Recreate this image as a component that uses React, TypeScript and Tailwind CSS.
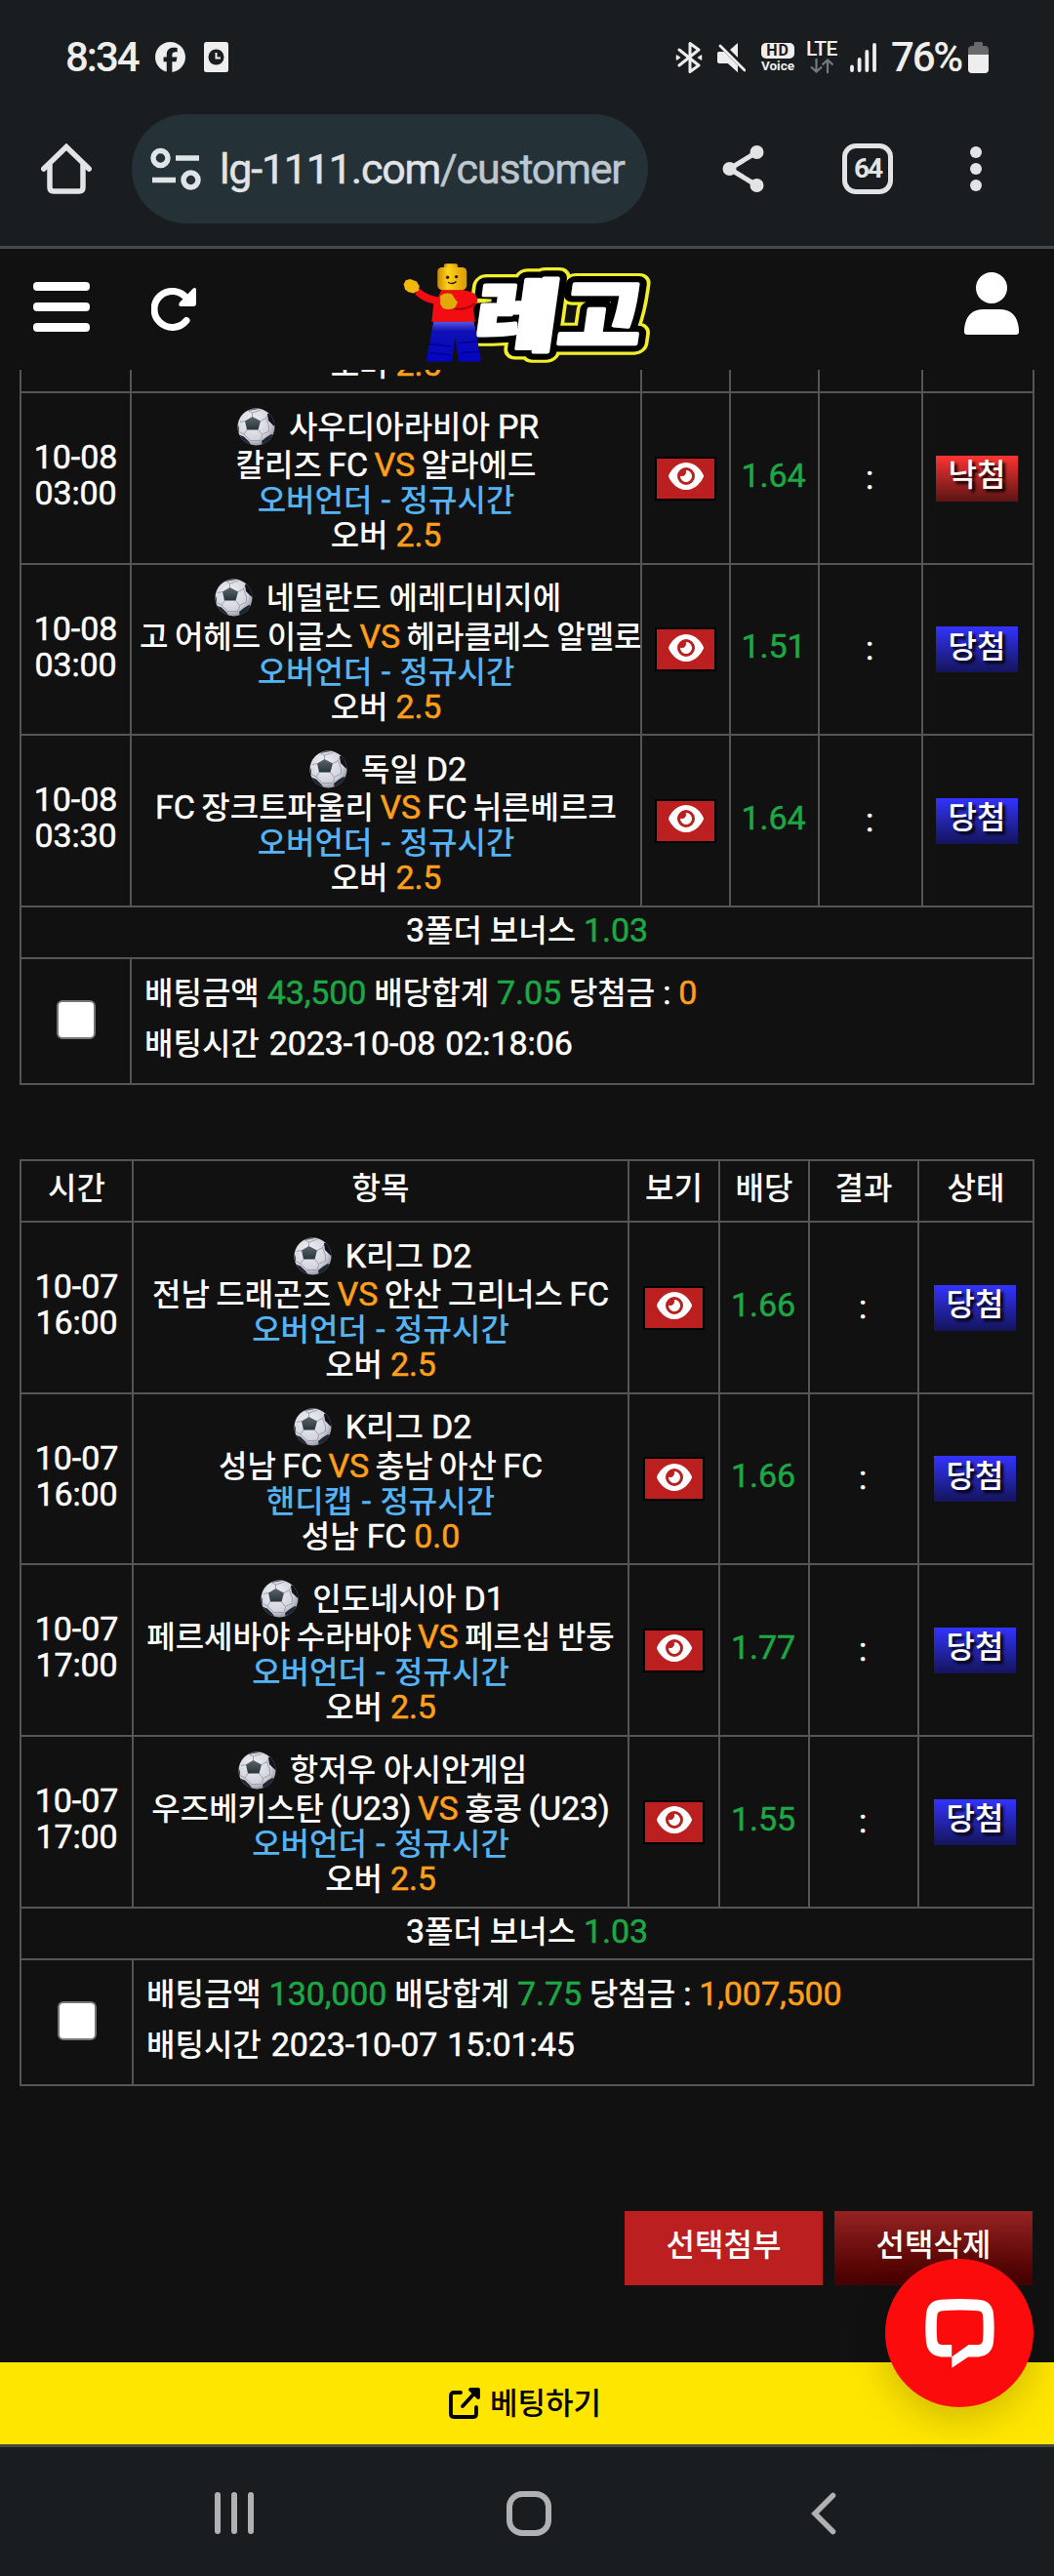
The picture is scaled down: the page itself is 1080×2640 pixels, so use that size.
import React from 'react';
import { FaFacebook, FaEye } from 'react-icons/fa6';

type Match = {
  id: number;
  date: string;
  time: string;
  league: string;
  home: string;
  away: string;
  market: string;
  pick: string;
  line: string;
  odds: string;
  won: boolean;
};

const firstSlip: Match[] = [
  { id: 1, date: '10-08', time: '03:00', league: '사우디아라비아 PR', home: '칼리즈 FC', away: '알라에드', market: '오버언더 - 정규시간', pick: '오버', line: '2.5', odds: '1.64', won: false },
  { id: 2, date: '10-08', time: '03:00', league: '네덜란드 에레디비지에', home: '고 어헤드 이글스', away: '헤라클레스 알멜로', market: '오버언더 - 정규시간', pick: '오버', line: '2.5', odds: '1.51', won: true },
  { id: 3, date: '10-08', time: '03:30', league: '독일 D2', home: 'FC 장크트파울리', away: 'FC 뉘른베르크', market: '오버언더 - 정규시간', pick: '오버', line: '2.5', odds: '1.64', won: true },
];

const secondSlip: Match[] = [
  { id: 4, date: '10-07', time: '16:00', league: 'K리그 D2', home: '전남 드래곤즈', away: '안산 그리너스 FC', market: '오버언더 - 정규시간', pick: '오버', line: '2.5', odds: '1.66', won: true },
  { id: 5, date: '10-07', time: '16:00', league: 'K리그 D2', home: '성남 FC', away: '충남 아산 FC', market: '핸디캡 - 정규시간', pick: '성남 FC', line: '0.0', odds: '1.66', won: true },
  { id: 6, date: '10-07', time: '17:00', league: '인도네시아 D1', home: '페르세바야 수라바야', away: '페르십 반둥', market: '오버언더 - 정규시간', pick: '오버', line: '2.5', odds: '1.77', won: true },
  { id: 7, date: '10-07', time: '17:00', league: '항저우 아시안게임', home: '우즈베키스탄 (U23)', away: '홍콩 (U23)', market: '오버언더 - 정규시간', pick: '오버', line: '2.5', odds: '1.55', won: true },
];

const firstCols = 'grid grid-cols-[113px_523px_91px_91px_106px_114px]';
const secondCols = 'grid grid-cols-[115px_508px_93px_92px_112px_118px]';
const cell = 'flex items-center justify-center border-r-2 border-b-2 border-[#555] overflow-hidden';

// Latin letters and digits are set a little larger and lighter than the hangul
const Txt = ({ children }: { children: string }) => (
  <>
    {children.split(/([A-Za-z0-9().,:-]+)/).map((part, i) =>
      i % 2 ? <span key={i} className="text-[34px] font-normal tracking-[-0.1px] [-webkit-text-stroke:0.5px]">{part}</span> : part
    )}
  </>
);

const Ball = () => (
  <svg viewBox="0 0 39 39" className="h-[39px] w-[39px] shrink-0">
    <defs>
      <radialGradient id="ball" cx="0.4" cy="0.35" r="0.7">
        <stop offset="0" stopColor="#f0f0f6" />
        <stop offset="0.7" stopColor="#d3d3de" />
        <stop offset="1" stopColor="#8c8c98" />
      </radialGradient>
      <linearGradient id="patch" x1="0" y1="0" x2="0" y2="1">
        <stop offset="0" stopColor="#5d6468" />
        <stop offset="1" stopColor="#26363a" />
      </linearGradient>
      <clipPath id="ballClip"><circle cx="19.5" cy="19.5" r="19" /></clipPath>
    </defs>
    <circle cx="19.500" cy="19.500" r="19" fill="url(#ball)" />
    <g clipPath="url(#ballClip)">
      <path
        d="M15.500 9V5L10 2M15.500 5l9-3M24 13.500l5.500-3M29.500 10.500l3-5M29.500 10.500l3 8M21.500 22.500l4 5M25.500 27.500l7-3.500M25.500 27.500l-1 5M10 22.500L7 27M7 27l-6-3M7 27l6 6M8 13.500l-5 1M32.500 18v6M13 33.500h11"
        fill="none"
        stroke="#9a9aa6"
        strokeWidth="0.9"
      />
      <path d="M15.500 9l8.500 4.500-2.500 9H10L8 13.500z" fill="url(#patch)" />
      <path d="M31 6l4-1 5 9v6l-3-2-5-5z" fill="#0f1318" />
      <path d="M3 28l4 1.500 5 5 3 4.500-6-1-6-6z" fill="#1c2733" />
      <path d="M25 34l5-4 5-3 2 1-6 8-5 3z" fill="#1c2733" />
      <path d="M10 3l7-3h7l-4 1.500-6 1z" fill="#565b62" />
      <path d="M0 16l2 4v5l-2-2z" fill="#4a5058" />
    </g>
  </svg>
);

const Logo = () => (
  <svg viewBox="40 45 760 305" className="h-[102px] w-[253px] overflow-visible">
    <defs>
      <linearGradient id="skin" x1="0" y1="0" x2="1" y2="0">
        <stop offset="0" stopColor="#c98a00" />
        <stop offset="0.35" stopColor="#ffd21c" />
        <stop offset="1" stopColor="#d99b00" />
      </linearGradient>
      <linearGradient id="legs" x1="0" y1="0" x2="0" y2="1">
        <stop offset="0" stopColor="#5a5ae6" />
        <stop offset="0.25" stopColor="#1010b4" />
        <stop offset="1" stopColor="#0404c4" />
      </linearGradient>
    </defs>
    <g
      transform="translate(252 293) skewX(-8) scale(1.09 0.94)"
      fontFamily="'Noto Sans CJK KR', sans-serif"
      fontWeight="900"
      fontSize="256"
      strokeLinejoin="round"
    >
      <text stroke="#f2ee2c" strokeWidth="72" fill="#f2ee2c">레고</text>
      <text stroke="#000" strokeWidth="52" fill="#000">레고</text>
      <text stroke="#fff" strokeWidth="12" fill="#fff">레고</text>
    </g>
    <path d="M262 152l50 2v8l-48 5z" fill="#f2ee2c" />
    {/* minifigure */}
    <path d="M134 222h124l8 40 14 84h-68l-12-74-10 74h-80l10-48z" fill="url(#legs)" />
    <path d="M120 292l66 8M122 320l64 6M210 290l62-6M214 320l62-4" stroke="#02028c" strokeWidth="5" />
    <path d="M76 138l14-16q26 22 58 26l10-22h70l26 8q18 12 14 30l-12 18 6 42H128l6-56q-32-4-58-30z" fill="#f20d12" />
    <path d="M196 184q40 4 64-16" fill="none" stroke="#a80008" strokeWidth="6" />
    <rect x="166" y="45" width="42" height="20" rx="5" fill="url(#skin)" />
    <rect x="146" y="56" width="90" height="70" rx="14" fill="url(#skin)" />
    <circle cx="177" cy="87" r="5" fill="#2b1a00" />
    <circle cx="204" cy="85" r="5" fill="#2b1a00" />
    <path d="M178 102q14 9 26-2" fill="none" stroke="#2b1a00" strokeWidth="4" />
    <path d="M42 108l6-12 14-4 20 8 8 14-2 14-16 8-16-4-10-8z" fill="#f0b90c" />
    <path d="M154 144q14-12 36-6l10 16 8 10-8 16q-20 10-38 2l-8-14z" fill="#e0aa08" />
  </svg>
);

const MatchRow = ({ match, cols, height }: { match: Match; cols: string; height: string }) => (
  <div className={`${cols} ${height}`}>
    <div className={`${cell} flex-col pb-1.5 leading-9`}>
      <span><Txt>{match.date}</Txt></span>
      <span><Txt>{match.time}</Txt></span>
    </div>
    <div className={`${cell} flex-col whitespace-nowrap pt-[3px] leading-9`}>
      <div className="flex h-10 items-center gap-[14px] pl-1">
        <Ball />
        <span><Txt>{match.league}</Txt></span>
      </div>
      <div className="flex h-[37px] w-full items-center px-2 pt-0.5 [word-spacing:-1.5px]">
        <p className="mx-auto">
          <Txt>{match.home}</Txt> <span className="text-[#ff9f1a]"><Txt>VS</Txt></span> <Txt>{match.away}</Txt>
        </p>
      </div>
      <p className="h-9 text-[#56b4f5] [word-spacing:1.5px]"><Txt>{match.market}</Txt></p>
      <p className="h-9">
        <Txt>{match.pick}</Txt> <span className="text-[#ff9f1a]"><Txt>{match.line}</Txt></span>
      </p>
    </div>
    <div className={cell}>
      <button className="flex h-[45px] w-[63px] items-center justify-center border-2 border-black bg-[#bc1f1f] pb-1">
        <FaEye className="h-[32px] w-[36px]" />
      </button>
    </div>
    <div className={`${cell} pr-0.5 pb-1.5 text-[#1da745]`}><span><Txt>{match.odds}</Txt></span></div>
    <div className={`${cell} pr-0.5 pb-0.5`}><span><Txt>:</Txt></span></div>
    <div className={`${cell} pr-0.5`}>
      <span
        className={`flex h-[47px] w-[84px] items-center justify-center bg-linear-to-b pb-1.5 [text-shadow:3px_3px_3px_#000] ${
          match.won ? 'from-[#3333ff] to-[#14145c]' : 'from-[#ff3333] to-[#5c1414]'
        }`}
      >
        {match.won ? '당첨' : '낙첨'}
      </span>
    </div>
  </div>
);

const BonusRow = () => (
  <div className="flex h-[53px] items-center justify-center border-r-2 border-b-2 border-[#555] pb-1">
    <p><Txt>3폴더 보너스</Txt> <span className="text-[#1da745]"><Txt>1.03</Txt></span></p>
  </div>
);

type SummaryProps = { cols: string; stake: string; total: string; payout: string; placed: string };

const SummaryRow = ({ cols, stake, total, payout, placed }: SummaryProps) => (
  <div className={`${cols} h-[129px]`}>
    <label className={`${cell} pb-1`}>
      <input type="checkbox" className="h-10 w-10 appearance-none rounded-md border-2 border-[#767676] bg-white" />
    </label>
    <div className="col-span-5 flex flex-col justify-center border-r-2 border-b-2 border-[#555] pb-1.5 pl-[13px] leading-[51px]">
      <p>
        배팅금액 <span className="text-[#1da745]"><Txt>{stake}</Txt></span> 배당합계{' '}
        <span className="text-[#1da745]"><Txt>{total}</Txt></span> <Txt>당첨금 :</Txt>{' '}
        <span className="text-[#ff9f1a]"><Txt>{payout}</Txt></span>
      </p>
      <p className="[word-spacing:2px]">배팅시간 <Txt>{placed}</Txt></p>
    </div>
  </div>
);

const StatusBar = () => (
  <div className="flex h-[117px] items-center justify-between px-[67px] text-[#eee]">
    <div className="flex items-center">
      <span className="w-[92px] text-[42px] leading-none font-medium tracking-[-2px]">8:34</span>
      <FaFacebook className="h-[31px] w-[31px]" />
      <svg viewBox="0 0 25 31" className="ml-[19px] h-[31px] w-[25px]">
        <rect width="25" height="31" rx="2.500" fill="#eee" />
        <circle cx="12.500" cy="15.500" r="8" fill="#191d1f" />
        <path d="M12.500 11v5.500H17" fill="none" stroke="#eee" strokeWidth="2" />
      </svg>
    </div>
    <div className="flex items-center">
      <svg viewBox="0 0 28 32" className="h-8 w-7" fill="none" stroke="#eee" strokeWidth="3" strokeLinecap="round" strokeLinejoin="round">
        <path d="M4 8l20 16-9 6.500V1.500L24 8 4 24" />
        <path d="M1.500 14v4l3-2zM26.500 14v4l-3-2z" fill="#eee" strokeWidth="1.500" />
      </svg>
      <svg viewBox="0 0 29 30" className="ml-[15px] h-[30px] w-[29px]" fill="#eee">
        <path d="M2 9h5l14 14v7l-10-9H3q-3 0-3-3v-6q0-3 2-3zM13 7l8-7v15z" />
        <path d="M3 3l25 25" stroke="#191d1f" strokeWidth="6" />
        <path d="M2 9h5l14 14v7l-10-9H3q-3 0-3-3v-6q0-3 2-3z" />
        <path d="M3 3l25 25" stroke="#eee" strokeWidth="2.800" strokeLinecap="round" />
      </svg>
      <div className="ml-4 flex w-[34px] flex-col items-center">
        <span className="flex h-4 w-full items-center justify-center rounded-[5px] bg-[#eee] text-[16px] leading-none font-bold tracking-[1px] text-[#191d1f]">HD</span>
        <span className="text-[13.500px] leading-[14px] font-bold">Voice</span>
      </div>
      <div className="ml-3 flex w-8 flex-col items-center gap-[2px]">
        <span className="text-[21px] leading-[16px] font-medium tracking-[-0.5px]">LTE</span>
        <svg viewBox="0 0 24 15" className="h-[15px] w-6" fill="none" stroke="#77797b" strokeWidth="2.200">
          <path d="M6.500 0v13M1 8.500l5.500 5 5.500-5M18 15V2M12.500 6.500L18 1.500l5.500 5" />
        </svg>
      </div>
      <svg viewBox="0 0 27 30" className="ml-[13px] h-[30px] w-[27px]" stroke="#eee" strokeWidth="3.800" strokeLinecap="round">
        <path d="M2 24.500V28M9.600 17v11M17.300 9v19M25 2v26" />
      </svg>
      <span className="ml-[15px] w-[79px] text-[42px] leading-none font-medium tracking-[-2.200px]">76%</span>
      <svg viewBox="0 0 21 32" className="h-8 w-[21px]">
        <path d="M6 4V1.500Q6 0 7.500 0h6Q15 0 15 1.500V4h2q4 0 4 4v6H0V8q0-4 4-4z" fill="#68696b" />
        <path d="M0 13h21v15q0 4-4 4H4q-4 0-4-4z" fill="#eee" />
      </svg>
    </div>
  </div>
);

const BrowserBar = () => (
  <div className="flex h-[138px] items-start border-b-[3px] border-[#43494c]">
    <div className="flex h-28 w-full items-center">
      <svg viewBox="0 0 52 52" className="ml-[42px] h-[52px] w-[52px]" fill="none" stroke="#e1e3e5" strokeWidth="5.500" strokeLinecap="round">
        <path d="M2.800 26L26 3.500 49.200 26" strokeLinejoin="miter" />
        <path d="M9 22v23q0 4 4 4h26q4 0 4-4V22" />
      </svg>
      <div className="ml-[41px] flex h-28 w-[529px] items-center rounded-full bg-[#243238]">
        <svg viewBox="0 0 52 44" className="ml-[19px] h-11 w-[52px]" fill="none" stroke="#dfe4e7" strokeWidth="5.500">
          <circle cx="10.500" cy="11" r="7.500" />
          <circle cx="41.500" cy="33.500" r="7.500" />
          <path d="M26 11h24M2 33.500h24" />
        </svg>
        <span className="ml-[19px] text-[43px] leading-none tracking-[-1.200px] whitespace-nowrap text-[#e1e3e5] [-webkit-text-stroke:0.5px]">
          lg-1111.com<span className="text-[#bec7cd]">/customer</span>
        </span>
      </div>
      <svg viewBox="0 0 43 50" className="ml-[76px] h-[50px] w-[43px]" fill="#e1e3e5" stroke="#e1e3e5">
        <path d="M35.500 8L7.500 25l28 17" fill="none" strokeWidth="5" />
        <circle cx="35.500" cy="8" r="7" stroke="none" />
        <circle cx="7.500" cy="25" r="7" stroke="none" />
        <circle cx="35.500" cy="42" r="7" stroke="none" />
      </svg>
      <div className="ml-20 flex h-[52px] w-[52px] items-center justify-center rounded-[14px] border-[5.500px] border-[#e1e3e5] text-[28px] leading-none font-bold tracking-[-2px] text-[#e1e3e5]">
        64
      </div>
      <div className="ml-[79px] flex flex-col gap-[5px]">
        <i className="h-3 w-3 rounded-full bg-[#e1e3e5]" />
        <i className="h-3 w-3 rounded-full bg-[#e1e3e5]" />
        <i className="h-3 w-3 rounded-full bg-[#e1e3e5]" />
      </div>
    </div>
  </div>
);

const SiteHeader = () => (
  <header className="flex h-[124px] items-start">
    <div className="mt-[34px] ml-[34px] flex w-[58px] flex-col gap-3">
      <i className="h-[9px] rounded-[4px] bg-white" />
      <i className="h-[9px] rounded-[4px] bg-white" />
      <i className="h-[9px] rounded-[4px] bg-white" />
    </div>
    <svg viewBox="0 0 46 45" className="mt-[39px] ml-[63px] h-[45px] w-[46px]">
      <path d="M36 34.500A18.500 18.500 0 1 1 36.500 12" fill="none" stroke="#fff" strokeWidth="7" strokeLinecap="round" />
      <path d="M43 1.500q3-1.500 3 1.500v14q0 3-3 3H30q-3-1-1-4z" fill="#fff" />
    </svg>
    <div className="mt-[15px] ml-[212px]">
      <Logo />
    </div>
    <svg viewBox="0 0 56 64" className="mt-6 ml-[322px] h-16 w-14" fill="#fff">
      <circle cx="28" cy="16" r="16" />
      <path d="M0 61V58Q2 38 20 38h16q18 0 20 20v3q0 3-3 3H3q-3 0-3-3z" />
    </svg>
  </header>
);

const App = () => {
  return (
    <div className="flex h-[2640px] w-[1080px] flex-col bg-[#111] font-[Roboto,'Noto_Sans_CJK_KR',sans-serif] text-white">
      <div className="bg-[#191d1f]">
        <StatusBar />
        <BrowserBar />
      </div>
      <SiteHeader />

      <main className="h-[2042px] px-5 text-[32px] font-medium">
        <section className="border-l-2 border-[#555]">
          {/* scrolled under the header */}
          <div className={`${firstCols} h-6`}>
            <div className={cell} />
            <div className={`${cell} items-end! pb-[9px] leading-9`}>
              <p>오버 <span className="text-[#ff9f1a]"><Txt>2.5</Txt></span></p>
            </div>
            <div className={cell} />
            <div className={cell} />
            <div className={cell} />
            <div className={cell} />
          </div>
          {firstSlip.map((match, i) => (
            <MatchRow key={match.id} match={match} cols={firstCols} height={i === 1 ? 'h-[175px]' : 'h-[176px]'} />
          ))}
          <BonusRow />
          <SummaryRow cols={firstCols} stake="43,500" total="7.05" payout="0" placed="2023-10-08 02:18:06" />
        </section>

        <section className="mt-[76px] border-t-2 border-l-2 border-[#555]">
          <div className={`${secondCols} h-[63px]`}>
            {['시간', '항목', '보기', '배당', '결과', '상태'].map((title) => (
              <div key={title} className={`${cell} pb-1.5`}>{title}</div>
            ))}
          </div>
          {secondSlip.map((match, i) => (
            <MatchRow key={match.id} match={match} cols={secondCols} height={i === 1 ? 'h-[175px]' : 'h-[176px]'} />
          ))}
          <BonusRow />
          <SummaryRow cols={secondCols} stake="130,000" total="7.75" payout="1,007,500" placed="2023-10-07 15:01:45" />
        </section>

        <div className="mt-32 mr-0.5 flex justify-end gap-3">
          <button className="h-[76px] w-[203px] bg-[#bc1f1f] pb-1.5">선택첨부</button>
          <button className="h-[76px] w-[203px] bg-linear-to-b from-[#962222] to-[#450000] pb-1.5">선택삭제</button>
        </div>
      </main>

      <div className="relative flex h-[87px] items-center justify-center gap-2.5 border-b-[3px] border-[#43493c] bg-[#ffe600] pr-1 text-[31px] text-black">
        <svg viewBox="0 0 32 32" className="h-8 w-8" fill="none" stroke="#000" strokeWidth="3.800" strokeLinecap="round" strokeLinejoin="round">
          <path d="M12 5H5Q2 5 2 8v19q0 3 3 3h20q3 0 3-3v-7M14 19L25 7" />
          <path d="M22 2h8v8z" fill="#000" />
        </svg>
        <span className="leading-none font-medium">베팅하기</span>
        <button className="absolute top-[-106px] right-[21px] flex h-[152px] w-[152px] items-center justify-center rounded-full bg-[#fb0b0b] shadow-[0_12px_40px_rgba(0,0,0,0.2)]">
          <svg viewBox="1044 355 212 214" className="ml-px h-[71px] w-[71px]">
            <path
              fill="#fff"
              fillRule="evenodd"
              d="M1092 357Q1150 353 1208 357Q1250 360 1254 402Q1258 445 1254 490Q1248 530 1208 534H1176L1125 568V534H1092Q1052 530 1046 490Q1042 445 1046 402Q1050 360 1092 357ZM1096 392Q1080 393 1080 408Q1077 445 1080 482Q1081 496 1096 497H1125V534L1177 497H1206Q1220 496 1221 482Q1224 445 1221 408Q1221 393 1206 392Q1150 388 1096 392Z"
            />
          </svg>
        </button>
      </div>

      <nav className="flex h-[132px] items-start bg-[#191d1f]">
        <div className="mt-[46px] ml-[220px] flex gap-[11px]">
          <i className="h-[43px] w-[6px] rounded-full bg-[#b0b1b3]" />
          <i className="h-[43px] w-[6px] rounded-full bg-[#b0b1b3]" />
          <i className="h-[43px] w-[6px] rounded-full bg-[#b0b1b3]" />
        </div>
        <i className="mt-[45px] ml-[259px] h-[46px] w-[46px] rounded-[16px] border-[6px] border-[#b0b1b3]" />
        <svg viewBox="0 0 26 44" className="mt-[46px] ml-[266px] h-11 w-[26px]" fill="none" stroke="#b0b1b3" strokeWidth="5.500" strokeLinecap="round">
          <path d="M22.500 3.500L4 22l18.500 18.500" />
        </svg>
      </nav>
    </div>
  );
};

export default App;
